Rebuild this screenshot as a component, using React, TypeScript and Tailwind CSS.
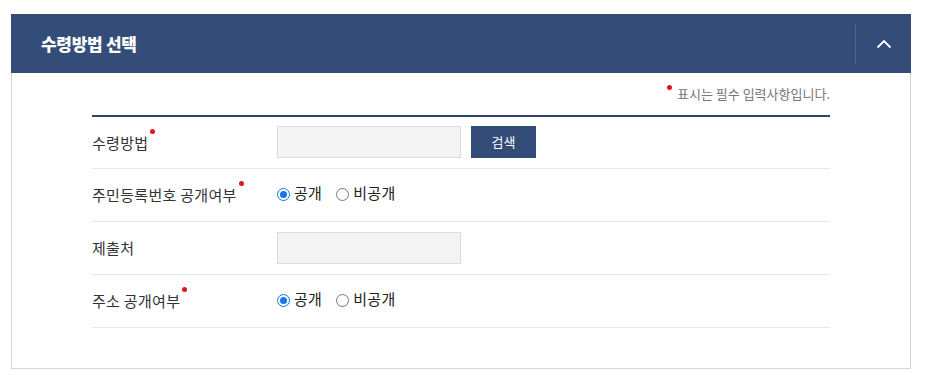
import React from "react";

const font = { fontFamily: '"Noto Sans CJK KR", "Noto Sans", sans-serif' };

function Req() {
  return <span className="absolute -right-[7px] top-[-3px] h-[5px] w-[5px] rounded-full bg-[#e0141e]" />;
}

function Label({ text, required }: { text: string; required?: boolean }) {
  return (
    <div className="w-[185px] shrink-0">
      <span className="relative text-[15px] tracking-[0.3px] text-[#333]">
        {text}
        {required && <Req />}
      </span>
    </div>
  );
}

function Radio({ checked, label }: { checked?: boolean; label: string }) {
  return (
    <label className="flex items-center gap-[4px] text-[15px] tracking-[0.3px] text-[#222]">
      {checked ? (
        <span className="flex h-[13px] w-[13px] items-center justify-center rounded-full border border-[#1a73e8] bg-white">
          <span className="h-[7px] w-[7px] rounded-full bg-[#1a73e8]" />
        </span>
      ) : (
        <span className="h-[13px] w-[13px] rounded-full border border-[#767676] bg-white" />
      )}
      <span className="-mt-[3px]">{label}</span>
    </label>
  );
}

export default function App() {
  return (
    <div className="min-h-[375px] bg-white pt-[14px]" style={font}>
      <div className="mx-[11px] w-[900px]">
        <div className="flex h-[59px] items-center justify-between bg-[#344c78] pl-[30px]">
          <h2 className="text-[17px] font-extrabold tracking-[-0.3px] text-white">수령방법 선택</h2>
          <div className="flex h-[40px] items-center border-l border-[#4d6390]">
            <button className="flex w-[55px] items-center justify-center">
              <svg width="16" height="10" viewBox="0 0 16 10" fill="none">
                <path d="M1.5 8.5L8 2l6.5 6.5" stroke="white" strokeWidth="1.8" />
              </svg>
            </button>
          </div>
        </div>
        <div className="h-[296px] border border-t-0 border-[#d4d4d4] px-[80px] pt-[11px]">
          <div className="flex justify-end">
            <span className="relative text-[13px] text-[#777]">
              <span className="absolute -left-[10px] top-[1px] h-[5px] w-[5px] rounded-full bg-[#e0141e]" />
              표시는 필수 입력사항입니다.
            </span>
          </div>
          <div className="mt-[11px] border-t-2 border-[#2f4470]">
            <div className="flex h-[52px] items-center border-b border-[#e6e6e6]">
              <Label text="수령방법" required />
              <div className="h-[32px] w-[184px] border border-[#dcdcdc] bg-[#f4f4f4]" />
              <button className="ml-[10px] h-[32px] w-[65px] bg-[#344c78] text-[13px] text-white">검색</button>
            </div>
            <div className="flex h-[53px] items-center border-b border-[#e6e6e6]">
              <Label text="주민등록번호 공개여부" required />
              <div className="flex items-center gap-[14px]">
                <Radio checked label="공개" />
                <Radio label="비공개" />
              </div>
            </div>
            <div className="flex h-[53px] items-center border-b border-[#e6e6e6]">
              <Label text="제출처" />
              <div className="h-[32px] w-[184px] border border-[#dcdcdc] bg-[#f4f4f4]" />
            </div>
            <div className="flex h-[53px] items-center border-b border-[#e6e6e6]">
              <Label text="주소 공개여부" required />
              <div className="flex items-center gap-[14px]">
                <Radio checked label="공개" />
                <Radio label="비공개" />
              </div>
            </div>
          </div>
        </div>
      </div>
    </div>
  );
}
